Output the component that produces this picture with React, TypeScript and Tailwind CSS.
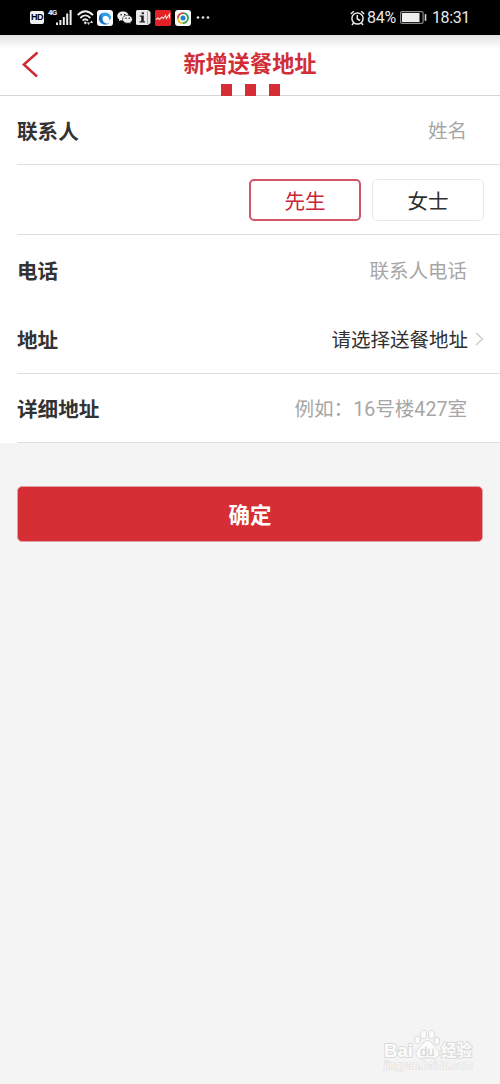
import type { ReactNode } from 'react';

function StatusBar() {
  return (
    <div className="flex h-[35px] shrink-0 items-center bg-black pl-[30px] pr-[30px] text-[#e8e8e8]">
      <div className="flex h-[13px] w-[14px] items-center justify-center rounded-[2px] bg-[#f0f0f0] font-['Liberation_Sans'] text-[9px] font-bold tracking-[-0.5px] text-black">
        HD
      </div>
      <span className="ml-[4px] mb-[9px] w-[8px] font-['Roboto'] text-[8px] leading-[8px] font-bold tracking-[-0.8px]">4G</span>
      <svg className="h-[15px] w-[17px]" viewBox="0 0 17 15" fill="#ececec">
        <rect x="0" y="12.5" width="2" height="2.5" />
        <rect x="3.4" y="10" width="2" height="5" />
        <rect x="6.8" y="7" width="2" height="8" />
        <rect x="10.2" y="3.5" width="2" height="11.5" />
        <rect x="13.6" y="0" width="2" height="15" />
      </svg>
      <svg className="ml-[4px] h-[15px] w-[17px]" viewBox="0 0 17 15" fill="none" stroke="#ececec" strokeWidth="1.9">
        <path d="M.7 5.2Q8.3-2.6 16 5.2" />
        <path d="M3.3 8Q8.3 2.8 13.3 8" />
        <path d="M5.6 10.6Q8.3 7.9 11 10.6" />
        <path d="M8.3 11.2l1.7 1.6-1.7 1.7-1.7-1.7z" fill="#ececec" stroke="none" />
        <path d="M11.5 15l-1.5-2.5h3zM14.5 10.5l1.5 2.5h-3z" fill="#ececec" stroke="none" />
      </svg>
      <svg className="ml-[3px] h-[16px] w-[16px]" viewBox="0 0 16 16">
        <rect width="16" height="16" rx="3" fill="#f8fbff" />
        <path d="M12.5 13A6.2 6.2 0 1 1 14 6.8Q14 9 12.5 10.8Q12.5 7.500 10 6.200Q7 5.500 5.500 8Q5 11.500 9 13.500" fill="#2f9fe3" />
        <path d="M5.500 8Q5 12 9.500 14Q3.500 14.500 2 9.500Q1.500 5 5 3Q3.500 6 5.500 8" fill="#1b6fc6" />
        <path d="M5.500 8.500Q6.200 5.800 9 6Q12 6.700 12.500 10.800L11 13.500Q6 13 5.500 8.500" fill="#f8fbff" />
      </svg>
      <svg className="ml-[4px] h-[13px] w-[16px]" viewBox="0 0 16 13">
        <path d="M6 .5C2.7.5.3 2.5.3 5c0 1.5.8 2.7 2 3.5l-.5 1.7 2-1A8 8 0 0 0 6 9.500c3.200 0 5.700-2 5.700-4.500S9.200.500 6 .500z" fill="#eee" />
        <path d="M10.500 4.200c-2.800 0-5 1.700-5 4s2.200 4 5 4l1.700-.2 1.600.9-.4-1.500c1.300-.8 2-1.900 2-3.200 0-2.300-2.200-4-4.900-4z" fill="#eee" stroke="#000" strokeWidth=".6" />
        <circle cx="4.1" cy="3.700" r=".75" /><circle cx="7.700" cy="3.500" r=".75" />
        <circle cx="9" cy="7.300" r=".7" /><circle cx="12.200" cy="7.300" r=".7" />
      </svg>
      <svg className="ml-[3px] h-[15px] w-[15px]" viewBox="0 0 15 15">
        <path d="M1.500 0H12l2.500 2v11L12 15H1.500Q0 15 0 13.500v-12Q0 0 1.500 0z" fill="#eaeaea" />
        <path d="M11.500 1v13" stroke="#888" strokeWidth=".7" />
        <path d="M5.700 2.300h2.200v2H5.700zM3.800 5.500h4v5.700H9v1.300H3.500v-1.300h1.700V6.800H3.800z" fill="#222" />
      </svg>
      <svg className="ml-[4px] h-[16px] w-[16px]" viewBox="0 0 16 16">
        <rect width="16" height="16" rx="1.500" fill="#e22227" />
        <path d="M1 9.500l2-1.500 1.500 1.500 2.500-2.500 1.500 1.500 2-3 1 3L14.500 4v4.500" fill="none" stroke="#ffd8d5" strokeWidth="1.100" />
      </svg>
      <svg className="ml-[4px] h-[16px] w-[16px]" viewBox="0 0 16 16" fill="none">
        <rect width="16" height="16" rx="3" fill="#fafafa" />
        <path d="M2.900 8.500A5.100 5.100 0 0 1 8 3.100" stroke="#d9483a" strokeWidth="1.900" />
        <path d="M8 3.100A5 5 0 0 1 13 8" stroke="#2a9b55" strokeWidth="1.900" />
        <path d="M13 8A5.100 5.100 0 0 1 7.500 13.100" stroke="#42a850" strokeWidth="1.900" />
        <path d="M7.500 13.100A5 5 0 0 1 2.900 8.500" stroke="#ecc72c" strokeWidth="1.900" />
        <circle cx="8" cy="8" r="2.500" fill="#2482c9" />
      </svg>
      <svg className="ml-[5px] h-[3px] w-[14px]" viewBox="0 0 14 3" fill="#e8e8e8">
        <circle cx="2" cy="1.500" r="1.300" /><circle cx="7" cy="1.500" r="1.300" /><circle cx="12" cy="1.500" r="1.300" />
      </svg>
      <div className="ml-auto flex items-center">
        <svg className="h-[16px] w-[15px]" viewBox="0 0 15 16" fill="none" stroke="#e8e8e8" strokeWidth="1.500">
          <circle cx="7.500" cy="8.500" r="5.600" />
          <path d="M7.300 5v4l2.800 1.500M.8 4l3-2.700M14.200 4l-3-2.700M3.500 13l-1.500 2M11.500 13l1.500 2" />
        </svg>
        <span className="ml-[2px] w-[31px] whitespace-nowrap font-['Roboto'] text-[16px] leading-[18px] tracking-[-0.3px]">84%</span>
        <svg className="ml-[2px] h-[13px] w-[27px]" viewBox="0 0 27 13">
          <rect x=".6" y=".6" width="22.500" height="11.800" rx="1.500" fill="none" stroke="#8a8a8a" strokeWidth="1.200" />
          <rect x="2" y="2" width="17.500" height="9" fill="#efefef" />
          <rect x="24.700" y="3.200" width="1.600" height="6.600" fill="#d8d8d8" />
        </svg>
        <span className="ml-[5px] w-[38px] whitespace-nowrap font-['Roboto'] text-[16px] leading-[18px] tracking-[-0.4px]">18:31</span>
      </div>
    </div>
  );
}

function Header() {
  return (
    <header className="relative flex h-[61px] shrink-0 items-start justify-center border-b border-[#d5d5d5] bg-white bg-linear-to-b from-[#e2e2e2] to-white to-[14px]">
      <svg className="absolute left-[22px] top-[16px] h-[27px] w-[17px]" viewBox="0 0 17 27" fill="none" stroke="#cf2931" strokeWidth="2.500">
        <path d="M15.500 1.500L1.800 13.500L15 25.500" />
      </svg>
      <h1 className="pt-[13px] text-[22.200px] leading-[32px] font-bold text-[#d12e37]">新增送餐地址</h1>
      <div className="absolute left-[221px] top-[49px] flex gap-[13px]">
        <i className="h-[12px] w-[11px] bg-[#d72d34]" />
        <i className="h-[12px] w-[11px] bg-[#d72d34]" />
        <i className="h-[12px] w-[11px] bg-[#d72d34]" />
      </div>
    </header>
  );
}

function Field({ label, children, className }: { label: string; children: ReactNode; className: string }) {
  return (
    <div className={`flex items-center justify-between border-[#dedede] ${className}`}>
      <span className="pt-[4px] text-[20.600px] leading-[30px] font-bold text-[#333]">{label}</span>
      {children}
    </div>
  );
}

function Watermark() {
  return (
    <div className="absolute bottom-[9px] left-[383px] h-[46px] w-[92px]">
      <svg className="h-[46px] w-[92px]" viewBox="0 0 92 46" fill="#fcfcfc" stroke="#d9d9d9" strokeWidth="1">
        <text x="1" y="28" fontSize="19" fontWeight="bold" fontFamily="'Liberation Sans', sans-serif" textLength="29" lengthAdjust="spacingAndGlyphs" strokeWidth="1.800" paintOrder="stroke">Bai</text>
        <ellipse cx="34.500" cy="11" rx="2.800" ry="3.800" />
        <ellipse cx="40.500" cy="5.500" rx="2.900" ry="4.200" />
        <ellipse cx="48.500" cy="5.500" rx="2.900" ry="4.200" />
        <ellipse cx="54" cy="12" rx="2.700" ry="3.800" />
        <path d="M44.500 11.500c-4 0-5 4.500-8 7s-4.500 5-3 8 4 3.300 6.500 2.700 6.500-.6 9 0 5.500 0 6.800-2.700-.7-5.500-3.300-8-4-7-8-7z" />
        <text x="37" y="26.500" fontSize="13" fontFamily="'Liberation Sans', sans-serif" fill="#d9d9d9" stroke="#d9d9d9" strokeWidth=".4">du</text>
        <text x="58" y="27" fontSize="15.500" fontFamily="'Noto Sans CJK SC', sans-serif" fontWeight="bold" textLength="31" paintOrder="stroke" strokeWidth="1.800">经验</text>
        <text x="1" y="40" fontSize="11" fontFamily="'Liberation Sans', sans-serif" textLength="89" lengthAdjust="spacingAndGlyphs" fill="#fbfbfb" stroke="#e0e0e0" strokeWidth="1.200" paintOrder="stroke">jingyan.baidu.com</text>
      </svg>
    </div>
  );
}

export default function App() {
  return (
    <div className="relative flex h-[1084px] w-[500px] flex-col overflow-hidden bg-[#f4f4f4] font-['Roboto','Noto_Sans_CJK_SC',sans-serif]">
      <StatusBar />
      <Header />
      <main>
        <section className="bg-white pl-[17px]">
          <Field label="联系人" className="h-[69px] border-b pr-[33px]">
            <span className="pt-[4px] text-[19.500px] text-[#a6a6a6]">姓名</span>
          </Field>
          <div className="flex h-[70px] items-center justify-end gap-[11px] border-b border-[#dedede] pr-[16px] text-[20.600px]">
            <button className="flex h-[42px] w-[112px] items-center justify-center rounded-[5px] border-2 border-[#d0566a] pt-[5px] text-[#cc2439]">先生</button>
            <button className="flex h-[42px] w-[112px] items-center justify-center rounded-[5px] border border-[#e9e9e9] pt-[5px] text-[#303030]">女士</button>
          </div>
          <Field label="电话" className="h-[69px] pr-[33px]">
            <span className="pt-[4px] text-[19.500px] text-[#a6a6a6]">联系人电话</span>
          </Field>
          <Field label="地址" className="h-[70px] border-b pr-[16px]">
            <span className="flex items-center text-[19.500px] text-[#303030]">
              <span className="pt-[4px]">请选择送餐地址</span>
              <svg className="ml-[7px] h-[14px] w-[9px]" viewBox="0 0 9 14" fill="none" stroke="#cecece" strokeWidth="1.500">
                <path d="M1 1l6.500 6L1 13" />
              </svg>
            </span>
          </Field>
          <Field label="详细地址" className="h-[69px] border-b pr-[33px]">
            <span className="pt-[4px] text-[19.600px] text-[#a6a6a6]">例如：16号楼427室</span>
          </Field>
        </section>
        <div className="px-[17px] pt-[43px]">
          <button className="flex h-[56px] w-full items-center justify-center rounded-[5px] border border-[#e0a3a5] bg-[#d62e35] pt-[4px] text-[21.500px] font-bold text-white">确定</button>
        </div>
      </main>
      <Watermark />
    </div>
  );
}
